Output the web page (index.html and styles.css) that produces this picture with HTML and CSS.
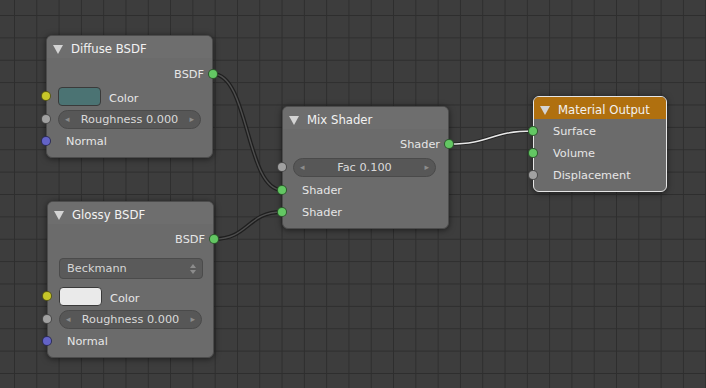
FILE: index.html
```html
<!DOCTYPE html>
<html>
<head>
    <title>Node Editor</title>
    <meta charset="UTF-8">
    <link rel="stylesheet" href="styles.css">
</head>
<body>
    <div class="editor">
        <svg class="links" width="706" height="388" viewBox="0 0 706 388">
            <g class="link">
                <path class="link-shadow" d="M213,74 C249,74 246,190 282,190"/>
                <path class="link-line" d="M213,74 C249,74 246,190 282,190"/>
            </g>
            <g class="link">
                <path class="link-shadow" d="M214,239 C249,239 247,212 282,212"/>
                <path class="link-line" d="M214,239 C249,239 247,212 282,212"/>
            </g>
            <g class="link active">
                <path class="link-shadow" d="M449,144 C492,144 490,131 533,131"/>
                <path class="link-line" d="M449,144 C492,144 490,131 533,131"/>
            </g>
        </svg>

        <!-- Diffuse BSDF -->
        <div class="node node-diffuse">
            <div class="node-header"><span class="collapse"></span>Diffuse BSDF</div>
            <div class="node-body">
                <div class="row out">BSDF<span class="socket shader"></span></div>
                <div class="row in swatch-row">
                    <span class="socket color"></span>
                    <span class="swatch teal"></span>
                    <span class="swatch-label">Color</span>
                </div>
                <div class="row in slider-row">
                    <span class="socket float"></span>
                    <div class="slider"><span class="arr">&#9666;</span><span>Roughness 0.000</span><span class="arr">&#9656;</span></div>
                </div>
                <div class="row in"><span class="socket vector"></span>Normal</div>
            </div>
        </div>

        <!-- Glossy BSDF -->
        <div class="node node-glossy">
            <div class="node-header"><span class="collapse"></span>Glossy BSDF</div>
            <div class="node-body">
                <div class="row out">BSDF<span class="socket shader"></span></div>
                <div class="dropdown">
                    <span>Beckmann</span>
                    <span class="updown"><i class="up"></i><i class="down"></i></span>
                </div>
                <div class="row in swatch-row">
                    <span class="socket color"></span>
                    <span class="swatch white"></span>
                    <span class="swatch-label">Color</span>
                </div>
                <div class="row in slider-row">
                    <span class="socket float"></span>
                    <div class="slider"><span class="arr">&#9666;</span><span>Roughness 0.000</span><span class="arr">&#9656;</span></div>
                </div>
                <div class="row in"><span class="socket vector"></span>Normal</div>
            </div>
        </div>

        <!-- Mix Shader -->
        <div class="node node-mix">
            <div class="node-header"><span class="collapse"></span>Mix Shader</div>
            <div class="node-body">
                <div class="row out">Shader<span class="socket shader"></span></div>
                <div class="row in slider-row fac">
                    <span class="socket float"></span>
                    <div class="slider"><span class="arr">&#9666;</span><span>Fac 0.100</span><span class="arr">&#9656;</span></div>
                </div>
                <div class="row in"><span class="socket shader"></span>Shader</div>
                <div class="row in"><span class="socket shader"></span>Shader</div>
            </div>
        </div>

        <!-- Material Output -->
        <div class="node node-output selected">
            <div class="node-header"><span class="collapse"></span>Material Output</div>
            <div class="node-body">
                <div class="row in"><span class="socket shader"></span>Surface</div>
                <div class="row in"><span class="socket shader"></span>Volume</div>
                <div class="row in"><span class="socket float"></span>Displacement</div>
            </div>
        </div>
    </div>
</body>
</html>
```

FILE: styles.css
```css
* {
    box-sizing: border-box;
    margin: 0;
    padding: 0;
}

body {
    font-family: "DejaVu Sans", "Liberation Sans", sans-serif;
    font-size: 11.3px;
    color: #e6e6e6;
    background: #3d3d3d;
    overflow: hidden;
}

.editor {
    position: relative;
    width: 706px;
    height: 388px;
    background-color: #3d3d3d;
    background-image:
        linear-gradient(to right, #2e2e2e 1px, transparent 1px),
        linear-gradient(to bottom, #2e2e2e 1px, transparent 1px);
    background-size: 22.3px 22.38px;
    background-position: 14px 15px;
}

/* links */
.links {
    position: absolute;
    left: 0;
    top: 0;
}

.link path {
    fill: none;
    stroke-linecap: round;
}

.link-shadow {
    stroke: #1f1f1f;
    stroke-width: 4;
}

.link-line {
    stroke: #4e4e4e;
    stroke-width: 1.4;
}

.link.active .link-shadow {
    stroke: #262626;
    stroke-width: 3.6;
}

.link.active .link-line {
    stroke: #e8e8e8;
    stroke-width: 1.5;
}

/* nodes */
.node {
    position: absolute;
    background: #6b6b6b;
    border-radius: 6px;
    border: 1px solid #4c4c4c;
    box-shadow: 0 1px 6px rgba(0, 0, 0, 0.55);
}

.node.selected {
    border-color: #e6e6e6;
}

.node-diffuse { left: 46px; top: 35px; width: 167px; }
.node-glossy  { left: 47px; top: 201px; width: 167px; }
.node-mix     { left: 282px; top: 106px; width: 167px; }
.node-output  { left: 533px; top: 96px; width: 134px; }

.node-header {
    height: 22px;
    display: flex;
    align-items: center;
    padding: 4px 0 0 24px;
    position: relative;
    color: #f2f2f2;
    font-size: 11.7px;
    border-radius: 5px 5px 0 0;
    background: #6e6e6e;
}

.node-output .node-header {
    background: #b0700f;
}

.collapse {
    position: absolute;
    left: 6px;
    top: 9px;
    width: 0;
    height: 0;
    border-left: 5px solid transparent;
    border-right: 5px solid transparent;
    border-top: 9px solid #d4d4d4;
}

.node-body {
    padding: 5px 0 5px;
}

.node-glossy .node-body,
.node-mix .node-body {
    padding-top: 4px;
}

.node-output .node-body {
    padding-top: 1px;
}

.row {
    position: relative;
    height: 22px;
    display: flex;
    align-items: center;
}

.row.in {
    padding-left: 19px;
}

.row.out {
    justify-content: flex-end;
    padding-right: 8px;
}

.socket {
    position: absolute;
    top: 6px;
    width: 10px;
    height: 10px;
    border-radius: 50%;
    border: 1px solid rgba(0, 0, 0, 0.55);
}

.row.in .socket { left: -6px; }
.row.out .socket { right: -6px; }

.socket.shader { background: #63c763; }
.socket.color  { background: #c7c729; }
.socket.float  { background: #a1a1a1; }
.socket.vector { background: #6363c7; }

.row.swatch-row {
    padding-left: 11px;
    gap: 8px;
    height: 23px;
}

.swatch-row .socket {
    top: 6px;
}

.swatch-label {
    padding-top: 3px;
}

.swatch {
    width: 43px;
    height: 19px;
    border-radius: 4px;
    border: 1px solid #3a3a3a;
}

.swatch.teal  { background: #4b7373; }
.swatch.white { background: #eaeaea; }

.row.slider-row {
    padding-left: 11px;
    padding-right: 11px;
}

.row.fac {
    height: 24px;
    padding-left: 10px;
    padding-right: 12px;
}

.fac .socket {
    top: 7px;
}

.slider {
    flex: 1;
    height: 19px;
    border-radius: 10px;
    background: #575757;
    border: 1px solid #4a4a4a;
    display: flex;
    align-items: center;
    justify-content: space-between;
    padding: 0 6px;
    color: #dadada;
}

.slider .arr {
    color: #8c8c8c;
    font-size: 9px;
}

.dropdown {
    margin: 8px 10px 6px 11px;
    height: 21px;
    border-radius: 4px;
    background: #5a5a5a;
    border: 1px solid #4b4b4b;
    display: flex;
    align-items: center;
    justify-content: space-between;
    padding: 0 6px 0 7px;
    color: #d6d6d6;
}

.updown {
    display: flex;
    flex-direction: column;
    gap: 2px;
}

.updown i {
    width: 0;
    height: 0;
    border-left: 3px solid transparent;
    border-right: 3px solid transparent;
}

.updown .up { border-bottom: 4px solid #8c8c8c; }
.updown .down { border-top: 4px solid #8c8c8c; }
```
